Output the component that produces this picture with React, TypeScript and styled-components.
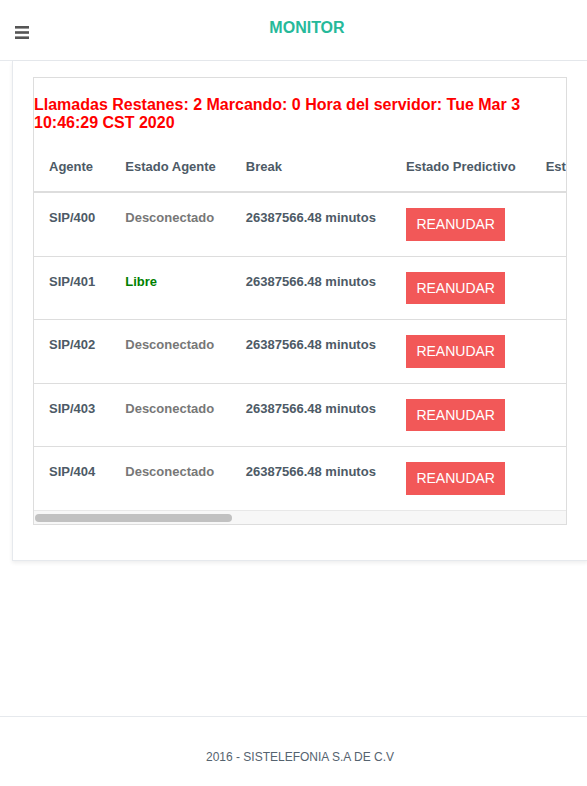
import styled, { createGlobalStyle } from 'styled-components';

const GlobalStyle = createGlobalStyle`
  * {
    box-sizing: border-box;
  }
  html, body {
    margin: 0;
    padding: 0;
    background: #fff;
  }
  body {
    font-family: "Liberation Sans", Arial, Helvetica, sans-serif;
    color: #4d5a66;
  }
`;

const Page = styled.div`
  min-height: 100vh;
  display: flex;
  flex-direction: column;
  overflow-x: clip;
`;

const TopBar = styled.header`
  height: 61px;
  display: flex;
  align-items: center;
  border-bottom: 1px solid #e6e9ed;
  padding-right: 17px;
`;

const MenuToggle = styled.button`
  width: 44px;
  height: 60px;
  display: flex;
  align-items: center;
  padding: 4px 0 0 15px;
  border: 0;
  background: none;
  cursor: pointer;
`;

const Title = styled.h1`
  flex: 1;
  margin: 0 0 4px;
  text-align: center;
  font-size: 16px;
  font-weight: 700;
  color: #26b99a;
`;

const Panel = styled.section`
  margin-left: 12px;
  margin-right: -1px;
  padding: 16px 20px 35px;
  border: 1px solid #e6e9ed;
  border-top: 0;
  background: #fff;
  box-shadow: 0 2px 4px rgba(0, 0, 0, 0.07);
`;

const TableFrame = styled.div`
  border: 1px solid #dddddd;
`;

const Scroller = styled.div`
  overflow: hidden;
`;

const ScrollTrack = styled.div`
  height: 14px;
  padding: 3px 0 0 1px;
  background: #f7f7f7;
  border-top: 1px solid #e8e8e8;
`;

const ScrollThumb = styled.div`
  width: 197px;
  height: 8px;
  border-radius: 4px;
  background: #c1c1c1;
`;

const Status = styled.h4`
  margin: 18px 0 10px;
  font-size: 16px;
  line-height: 1.1;
  font-weight: 700;
  color: #ff0000;
`;

const Table = styled.table`
  width: 1430px;
  border-collapse: collapse;
  border-spacing: 0;
`;

const Th = styled.th<{ $fill?: boolean }>`
  width: ${(p) => (p.$fill ? 'auto' : '1%')};
  padding: 16px 15px 14px;
  text-align: left;
  font-size: 13px;
  line-height: 20px;
  font-weight: 700;
  white-space: nowrap;
  color: #4d5a66;
  border-bottom: 2px solid #dddddd;
`;

const Row = styled.tr`
  border-bottom: 1px solid #dddddd;

  &:last-child {
    border-bottom: 0;
  }
`;

const Td = styled.td<{ $tone?: 'free' | 'off' }>`
  padding: 15px;
  vertical-align: top;
  font-size: 13px;
  line-height: 20px;
  font-weight: 700;
  white-space: nowrap;
  color: ${(p) =>
    p.$tone === 'free' ? '#008000' : p.$tone === 'off' ? '#777777' : '#4d5a66'};
`;

const ResumeButton = styled.button`
  height: 32.5px;
  padding: 0 10.5px;
  border: 0;
  border-radius: 0;
  background: #f25858;
  color: #fff;
  font-family: "Liberation Sans", Arial, Helvetica, sans-serif;
  font-size: 14px;
  line-height: 1;
  cursor: pointer;
`;

const Footer = styled.footer`
  margin-top: auto;
  height: 70px;
  padding: 32px 0 0 13px;
  border-top: 1px solid #e6e9ed;
  text-align: center;
  font-size: 12px;
  line-height: 17px;
  color: #55636f;
`;

const BarsIcon = () => (
  <svg width="14" height="13" viewBox="0 0 14 13" aria-hidden="true">
    <rect x="0" y="0" width="14" height="2.6" fill="#555" />
    <rect x="0" y="5.2" width="14" height="2.6" fill="#555" />
    <rect x="0" y="10.4" width="14" height="2.6" fill="#555" />
  </svg>
);

const columns = [
  'Agente',
  'Estado Agente',
  'Break',
  'Estado Predictivo',
  'Estado Llamada',
  'Número',
  'Campaña',
  'Duración',
];

const agents = [
  { ext: 'SIP/400', state: 'Desconectado' },
  { ext: 'SIP/401', state: 'Libre' },
  { ext: 'SIP/402', state: 'Desconectado' },
  { ext: 'SIP/403', state: 'Desconectado' },
  { ext: 'SIP/404', state: 'Desconectado' },
];

const App = () => {
  return (
    <Page>
      <GlobalStyle />
      <TopBar>
        <MenuToggle aria-label="menu">
          <BarsIcon />
        </MenuToggle>
        <Title>MONITOR</Title>
      </TopBar>

      <Panel>
        <TableFrame>
          <Scroller>
            <Status>
              Llamadas Restanes: 2 Marcando: 0 Hora del servidor: Tue Mar 3 10:46:29 CST 2020
            </Status>
            <Table>
              <thead>
                <tr>
                  {columns.map((col, i) => (
                    <Th key={col} $fill={i === columns.length - 1}>
                      {col}
                    </Th>
                  ))}
                </tr>
              </thead>
              <tbody>
                {agents.map((a) => (
                  <Row key={a.ext}>
                    <Td>{a.ext}</Td>
                    <Td $tone={a.state === 'Libre' ? 'free' : 'off'}>{a.state}</Td>
                    <Td>26387566.48 minutos</Td>
                    <Td>
                      <ResumeButton>REANUDAR</ResumeButton>
                    </Td>
                    <Td />
                    <Td />
                    <Td />
                    <Td />
                  </Row>
                ))}
              </tbody>
            </Table>
          </Scroller>
          <ScrollTrack>
            <ScrollThumb />
          </ScrollTrack>
        </TableFrame>
      </Panel>

      <Footer>2016 - SISTELEFONIA S.A DE C.V</Footer>
    </Page>
  );
};

export default App;
